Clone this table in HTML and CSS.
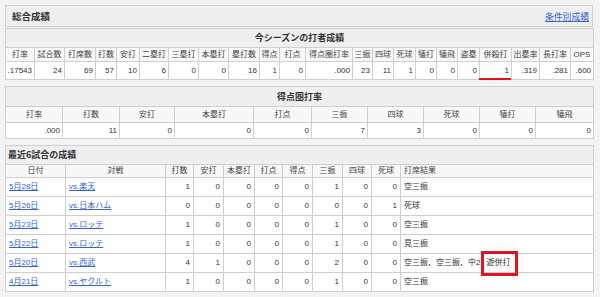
FILE: index.html
```html
<!DOCTYPE html>
<html lang="ja">
<head>
<meta charset="utf-8">
<title>総合成績</title>
<link rel="stylesheet" href="styles.css">
</head>
<body>
<div class="page">
  <div class="top-head">
    <span class="top-title">総合成績</span>
    <a class="top-link" href="#">条件別成績</a>
  </div>

  <table class="stats t1">
    <colgroup>
      <col style="width:29px"><col style="width:30px"><col style="width:31px"><col style="width:21px"><col style="width:23px"><col style="width:29px"><col style="width:30px"><col style="width:30px"><col style="width:31px"><col style="width:20px"><col style="width:26px"><col style="width:47px"><col style="width:20px"><col style="width:21px"><col style="width:22px"><col style="width:21px"><col style="width:21px"><col style="width:22px"><col style="width:32px"><col style="width:28px"><col style="width:31px"><col style="width:23px">
    </colgroup>
    <tr class="title-row"><th colspan="22" class="center">今シーズンの打者成績</th></tr>
    <tr class="head-row">
      <td>打率</td><td>試合数</td><td>打席数</td><td>打数</td><td>安打</td><td>二塁打</td><td>三塁打</td><td>本塁打</td><td>塁打数</td><td>得点</td><td>打点</td><td>得点圏打率</td><td>三振</td><td>四球</td><td>死球</td><td>犠打</td><td>犠飛</td><td>盗塁</td><td>併殺打</td><td>出塁率</td><td>長打率</td><td>OPS</td>
    </tr>
    <tr class="data-row">
      <td>.17543</td><td>24</td><td>69</td><td>57</td><td>10</td><td>6</td><td>0</td><td>0</td><td>16</td><td>1</td><td>0</td><td>.000</td><td>23</td><td>11</td><td>1</td><td>0</td><td>0</td><td>0</td><td class="mark">1</td><td>.319</td><td>.281</td><td>.600</td>
    </tr>
  </table>

  <table class="stats t2">
    <colgroup>
      <col style="width:57px"><col style="width:57px"><col style="width:55px"><col style="width:79px"><col style="width:58px"><col style="width:56px"><col style="width:56px"><col style="width:56px"><col style="width:56px"><col style="width:58px">
    </colgroup>
    <tr class="title-row"><th colspan="10" class="center">得点圏打率</th></tr>
    <tr class="head-row">
      <td>打率</td><td>打数</td><td>安打</td><td>本塁打</td><td>打点</td><td>三振</td><td>四球</td><td>死球</td><td>犠打</td><td>犠飛</td>
    </tr>
    <tr class="data-row">
      <td>.000</td><td>11</td><td>0</td><td>0</td><td>0</td><td>7</td><td>3</td><td>0</td><td>0</td><td>0</td>
    </tr>
  </table>

  <table class="stats t3">
    <colgroup>
      <col style="width:60px"><col style="width:100px"><col style="width:28px"><col style="width:30px"><col style="width:31px"><col style="width:28px"><col style="width:30px"><col style="width:30px"><col style="width:29px"><col style="width:29px"><col style="width:193px">
    </colgroup>
    <tr class="title-row"><th colspan="11" class="left">最近6試合の成績</th></tr>
    <tr class="head-row">
      <td>日付</td><td>対戦</td><td>打数</td><td>安打</td><td>本塁打</td><td>打点</td><td>得点</td><td>三振</td><td>四球</td><td>死球</td><td class="left">打席結果</td>
    </tr>
    <tr class="data-row">
      <td class="left"><a href="#">5月28日</a></td><td class="left"><a href="#">vs.楽天</a></td><td>1</td><td>0</td><td>0</td><td>0</td><td>0</td><td>1</td><td>0</td><td>0</td><td class="left">空三振</td>
    </tr>
    <tr class="data-row">
      <td class="left"><a href="#">5月26日</a></td><td class="left"><a href="#">vs.日本ハム</a></td><td>0</td><td>0</td><td>0</td><td>0</td><td>0</td><td>0</td><td>0</td><td>1</td><td class="left">死球</td>
    </tr>
    <tr class="data-row">
      <td class="left"><a href="#">5月23日</a></td><td class="left"><a href="#">vs.ロッテ</a></td><td>1</td><td>0</td><td>0</td><td>0</td><td>0</td><td>1</td><td>0</td><td>0</td><td class="left">空三振</td>
    </tr>
    <tr class="data-row">
      <td class="left"><a href="#">5月22日</a></td><td class="left"><a href="#">vs.ロッテ</a></td><td>1</td><td>0</td><td>0</td><td>0</td><td>0</td><td>1</td><td>0</td><td>0</td><td class="left">見三振</td>
    </tr>
    <tr class="data-row">
      <td class="left"><a href="#">5月20日</a></td><td class="left"><a href="#">vs.西武</a></td><td>4</td><td>1</td><td>0</td><td>0</td><td>0</td><td>2</td><td>0</td><td>0</td><td class="left">空三振、空三振、中2<span class="boxed">遊併打</span></td>
    </tr>
    <tr class="data-row">
      <td class="left"><a href="#">4月21日</a></td><td class="left"><a href="#">vs.ヤクルト</a></td><td>1</td><td>0</td><td>0</td><td>0</td><td>0</td><td>1</td><td>0</td><td>0</td><td class="left">空三振</td>
    </tr>
  </table>
</div>
</body>
</html>
```
FILE: styles.css
```css
html, body {
  margin: 0;
  padding: 0;
  background: #f3f3f3;
}
body {
  font-family: "Liberation Sans", "Noto Sans CJK JP", sans-serif;
  font-size: 8px;
  color: #333;
}
.page {
  padding: 5px 7px 4px 5px;
  display: flex;
  flex-direction: column;
}
.top-head {
  height: 20px;
  border: 1px solid #d2d2d2;
  background: #efefef;
  display: flex;
  align-items: center;
  justify-content: space-between;
  padding: 0 3px 0 6px;
  box-sizing: content-box;
  width: 577px;
}
.top-title {
  font-size: 9.5px;
  font-weight: bold;
  color: #333;
  font-family: "Noto Sans CJK JP", sans-serif;
}
.top-link {
  font-size: 8.8px;
  color: #3366cc;
  text-decoration: underline;
  font-family: "Noto Sans CJK JP", sans-serif;
}
.stats {
  width: 588px;
  table-layout: fixed;
  border-collapse: collapse;
  background: #fff;
  margin-top: 1px;
}
.t2, .t3 {
  margin-top: 6px;
}
.stats td, .stats th {
  border: 1px solid #cfcfcf;
  padding: 0 2px;
  white-space: nowrap;
  overflow: visible;
  line-height: 10px;
}
.title-row th {
  background: #efefef;
  font-size: 9px;
  font-weight: bold;
  color: #333;
  height: 18px;
  font-family: "Noto Sans CJK JP", sans-serif;
}
.t2 .title-row th { height: 19px; }
.title-row th.center { text-align: center; }
.title-row th.left { text-align: left; padding-left: 2px; }
.head-row td {
  background: #f8f8f8;
  text-align: center;
  height: 13px;
  padding: 0 1px;
  color: #444;
}
.t2 .head-row td { height: 15px; }
.t3 .head-row td { height: 12px; }
.head-row td.left { text-align: left; padding-left: 3px; }
.data-row td {
  text-align: right;
  height: 17px;
  padding: 0 2px 0 1px;
}
.t2 .data-row td { height: 15px; }
.t3 .data-row td { height: 18px; padding-right: 3px; }
.data-row td.left { text-align: left; padding-left: 3px; }
.data-row a {
  color: #3366cc;
  text-decoration: underline;
}
.mark {
  position: relative;
}
.mark::after {
  content: "";
  position: absolute;
  left: -1px;
  right: 0;
  bottom: -1px;
  height: 2px;
  background: #e4121c;
}
.boxed {
  position: relative;
  margin-left: 6px;
}
.boxed::after {
  content: "";
  position: absolute;
  left: -5px;
  right: -8px;
  top: -7px;
  bottom: -9px;
  border: 3px solid #e4121c;
}
```
